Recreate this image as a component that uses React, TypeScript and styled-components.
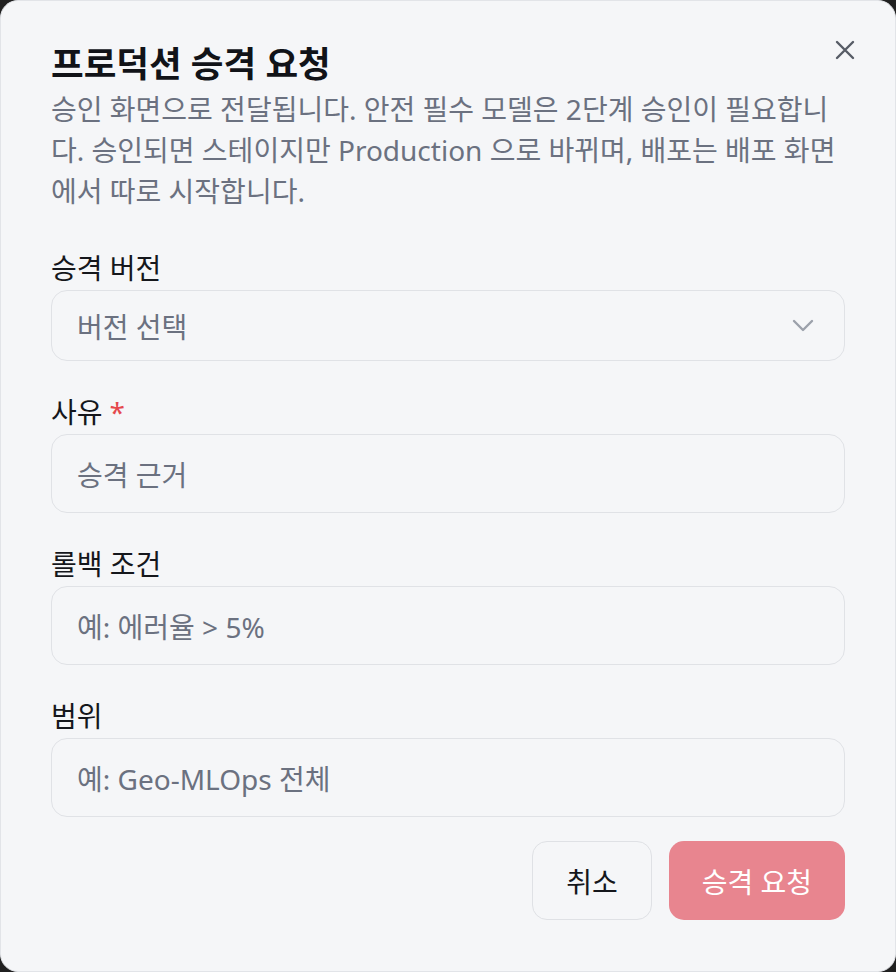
import React from 'react';
import styled, { createGlobalStyle } from 'styled-components';

const GlobalStyle = createGlobalStyle`
  html, body {
    margin: 0;
    padding: 0;
    background: #202020;
  }
  body {
    font-family: "Noto Sans", "Noto Sans CJK KR", sans-serif;
    -webkit-font-smoothing: antialiased;
  }
  * {
    box-sizing: border-box;
  }
`;

const Dialog = styled.div`
  position: relative;
  width: 896px;
  height: 972px;
  background: #f5f6f8;
  border: 1.5px solid #e2e4e8;
  border-radius: 18px;
  padding: 40px 50px 50px;
  display: flex;
  flex-direction: column;
`;

const CloseButton = styled.button`
  position: absolute;
  top: 34px;
  right: 35px;
  width: 30px;
  height: 30px;
  padding: 0;
  border: none;
  background: transparent;
  color: #575c66;
  display: flex;
  align-items: center;
  justify-content: center;
  cursor: pointer;
`;

const Header = styled.div`
  display: flex;
  flex-direction: column;
  gap: 4px;
  margin-bottom: 38px;
`;

const Title = styled.h2`
  margin: 0;
  font-size: 35.5px;
  line-height: 44px;
  font-weight: 700;
  color: #111318;
`;

const Description = styled.p`
  margin: 0;
  font-size: 28px;
  line-height: 41px;
  color: #6b7180;
`;

const Form = styled.div`
  display: flex;
  flex-direction: column;
  gap: 33px;
`;

const Field = styled.div`
  display: flex;
  flex-direction: column;
  gap: 4px;
`;

const Label = styled.label`
  font-size: 28px;
  line-height: 36px;
  font-weight: 400;
  color: #15171c;
`;

const Required = styled.span`
  color: #e5484d;
  margin-left: 7px;
`;

const Control = styled.div<{ $height: number }>`
  display: flex;
  align-items: center;
  justify-content: space-between;
  height: ${p => p.$height}px;
  padding: 0 30px 0 25px;
  border: 1.5px solid #e0e2e6;
  border-radius: 16px;
  background: #f5f6f8;
`;

const Placeholder = styled.span`
  font-size: 28px;
  color: #6b7180;
`;

const Actions = styled.div`
  display: flex;
  justify-content: flex-end;
  gap: 17px;
  margin-top: 24px;
`;

const Button = styled.button<{ $primary?: boolean }>`
  height: 79px;
  padding: 0 33px;
  border-radius: 15px;
  font-family: inherit;
  font-size: 28px;
  font-weight: 400;
  border: ${p => (p.$primary ? 'none' : '1.5px solid #dfe1e5')};
  background: ${p => (p.$primary ? '#e8858f' : '#f5f6f8')};
  color: ${p => (p.$primary ? '#ffffff' : '#15171c')};
  cursor: pointer;
`;

const Chevron = () => (
  <svg width="22" height="14" viewBox="0 0 22 14" fill="none">
    <polyline points="2,2 11,11 20,2" stroke="#9ca1ab" strokeWidth="2.4" strokeLinecap="round" strokeLinejoin="round" />
  </svg>
);

const CloseIcon = () => (
  <svg width="20" height="20" viewBox="0 0 20 20" fill="none">
    <path d="M2 2 L18 18 M18 2 L2 18" stroke="currentColor" strokeWidth="2.4" strokeLinecap="round" />
  </svg>
);

const fields = [
  { label: '사유', placeholder: '승격 근거', required: true },
  { label: '롤백 조건', placeholder: '예: 에러율 > 5%' },
  { label: '범위', placeholder: '예: Geo-MLOps 전체' },
];

export default function App() {
  return (
    <>
      <GlobalStyle />
      <Dialog>
        <CloseButton aria-label='닫기'>
          <CloseIcon />
        </CloseButton>
        <Header>
          <Title>프로덕션 승격 요청</Title>
          <Description>
            승인 화면으로 전달됩니다. 안전 필수 모델은 2단계 승인이 필요합니다. 승인되면 스테이지만 Production 으로 바뀌며, 배포는 배포 화면에서 따로 시작합니다.
          </Description>
        </Header>
        <Form>
          <Field>
            <Label>승격 버전</Label>
            <Control $height={71}>
              <Placeholder>버전 선택</Placeholder>
              <Chevron />
            </Control>
          </Field>
          {fields.map(f => (
            <Field key={f.label}>
              <Label>
                {f.label}
                {f.required && <Required>*</Required>}
              </Label>
              <Control $height={79}>
                <Placeholder>{f.placeholder}</Placeholder>
              </Control>
            </Field>
          ))}
        </Form>
        <Actions>
          <Button>취소</Button>
          <Button $primary>승격 요청</Button>
        </Actions>
      </Dialog>
    </>
  );
}
